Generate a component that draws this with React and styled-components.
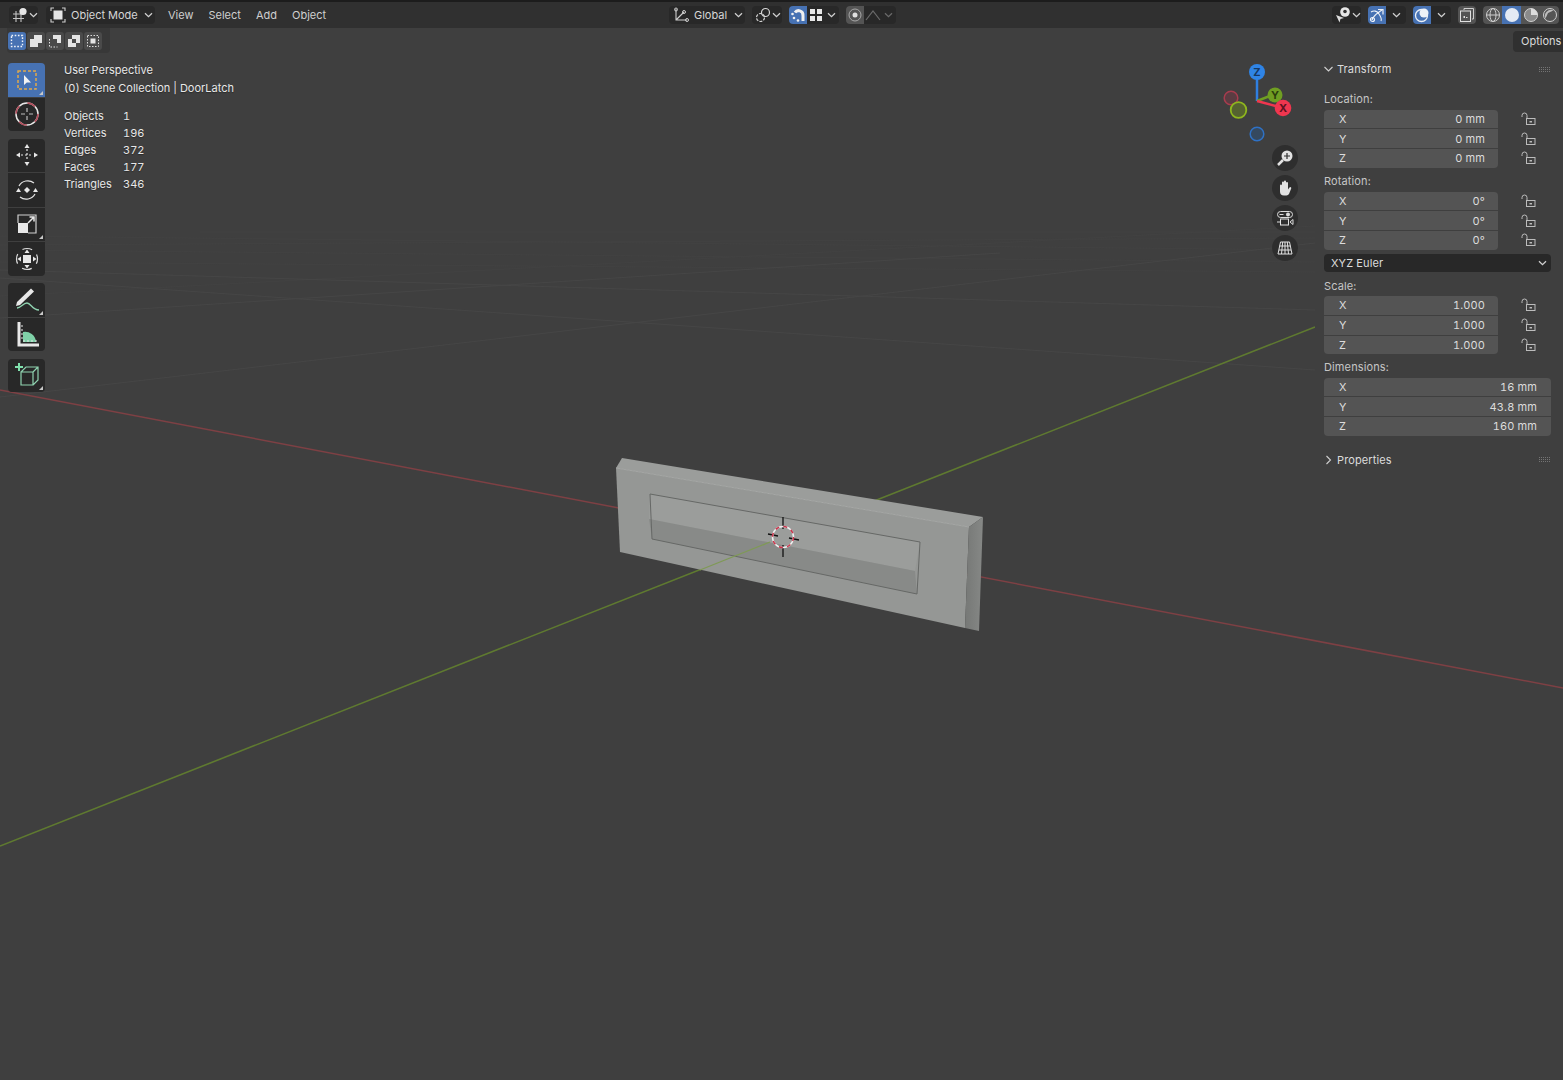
import React from "react";
import styled, { createGlobalStyle } from "styled-components";

const GlobalStyle = createGlobalStyle`
  html, body {
    margin: 0;
    padding: 0;
    background: #3f3f3f;
    font-family: Inter, "Noto Sans", "Liberation Sans", sans-serif;
  }
  svg {
    flex: none;
  }
`;

const Page = styled.div`
  position: relative;
  width: 1563px;
  height: 1080px;
  overflow: hidden;
  background: #3f3f3f;
  color: #dcdcdc;
  font-size: 11px;
  font-variant-numeric: tabular-nums;
  display: flex;
  flex-direction: column;
`;

const Scene = styled.svg`
  position: absolute;
  left: 0;
  top: 0;
  width: 1563px;
  height: 1080px;
`;

const TopBar = styled.div`
  position: relative;
  height: 26px;
  border-top: 2px solid #1c1c1c;
  background: #303030;
  display: grid;
  grid-template-columns: 660px 663px 1fr;
  align-items: center;
  padding-left: 9px;
`;

const BarSection = styled.div`
  display: flex;
  align-items: center;
  gap: ${(p) => p.$gap || 7}px;
`;

const Group = styled.div`
  display: flex;
  align-items: center;
  height: 18px;
  border-radius: 4px;
  background: #282828;
  width: ${(p) => p.$w}px;
  padding-left: ${(p) => p.$pad || 0}px;
  padding-right: ${(p) => p.$padRight || 0}px;
  box-sizing: border-box;
  overflow: hidden;
  flex: none;
`;

const GroupLabel = styled.span`
  margin-left: 5px;
  flex: 1;
  white-space: nowrap;
  color: #d6d6d6;
`;

const IconCell = styled.div`
  width: ${(p) => p.$w || 18}px;
  height: 18px;
  display: flex;
  align-items: center;
  justify-content: center;
  flex: none;
  background: ${(p) => p.$bg || "transparent"};
`;

const Menu = styled.div`
  display: flex;
  gap: 15px;
  margin-left: 5px;
  color: #cfcfcf;
`;

const ToolHeader = styled.div`
  position: relative;
  height: 25px;
  display: flex;
  justify-content: space-between;
  align-items: flex-start;
`;

const SelectModes = styled.div`
  display: flex;
  align-items: center;
  gap: 1px;
  width: 103px;
  height: 25px;
  margin-left: 7px;
  padding-left: 1px;
  box-sizing: border-box;
  background: #383838;
  border-radius: 0 0 4px 4px;
`;

const ModeButton = styled.div`
  width: 18px;
  height: 18px;
  border-radius: 3px;
  display: flex;
  align-items: center;
  justify-content: center;
  background: ${(p) => (p.$active ? "#4772b3" : "#4a4a4a")};
`;

const OptionsTab = styled.div`
  width: 50px;
  height: 21px;
  margin-top: 3px;
  padding-left: 8px;
  box-sizing: border-box;
  background: #303030;
  border-radius: 4px 0 0 4px;
  line-height: 21px;
  white-space: nowrap;
  overflow: hidden;
  color: #dcdcdc;
`;

const Viewport = styled.div`
  position: relative;
  flex: 1;
  display: flex;
  align-items: flex-start;
`;

const Toolbar = styled.div`
  width: 37px;
  margin: 10px 0 0 8px;
  display: flex;
  flex-direction: column;
  gap: 7.5px;
  flex: none;
`;

const ToolGroup = styled.div`
  display: flex;
  flex-direction: column;
  gap: 1px;
`;

const Tool = styled.div`
  position: relative;
  height: 33.5px;
  display: flex;
  align-items: center;
  justify-content: center;
  background: ${(p) => (p.$active ? "#4772b3" : "#282828")};
  &:first-child {
    border-radius: 4px 4px 0 0;
  }
  &:last-child {
    border-radius: 0 0 4px 4px;
  }
  &:only-child {
    border-radius: 4px;
  }
  ${(p) =>
    p.$corner &&
    `&::after {
      content: "";
      position: absolute;
      right: 2px;
      bottom: 2px;
      border-style: solid;
      border-width: 0 0 4px 4px;
      border-color: transparent transparent #c8c8c8 transparent;
    }`}
`;

const Stats = styled.div`
  margin: 8px 0 0 19px;
  width: 200px;
  flex: none;
  color: #e8e8e8;
  text-shadow: 0 1px 1px rgba(0, 0, 0, 0.35);
`;

const StatLine = styled.div`
  height: 18px;
  line-height: 18px;
  white-space: nowrap;
`;

const StatTable = styled.div`
  margin-top: 11px;
  display: grid;
  grid-template-columns: 59px 1fr;
  grid-auto-rows: 17px;
  line-height: 17px;
`;

const Nav = styled.div`
  position: absolute;
  left: 1217px;
  top: 9px;
  width: 85px;
  display: flex;
  flex-direction: column;
  align-items: flex-end;
`;

const NavButtons = styled.div`
  margin-top: 1px;
  display: flex;
  flex-direction: column;
  gap: 4px;
  padding-right: 4px;
`;

const NavButton = styled.div`
  width: 26px;
  height: 26px;
  border-radius: 50%;
  background: #2e2e2e;
  display: flex;
  align-items: center;
  justify-content: center;
`;

const Sidebar = styled.div`
  position: absolute;
  right: 0;
  top: 0;
  width: 248px;
  height: 425px;
  box-sizing: border-box;
  padding: 7px 12px 0 9px;
  background: #3f3f3f;
  letter-spacing: 0.12px;
`;

const PanelHead = styled.div`
  display: flex;
  align-items: center;
  height: 18px;
  color: #dcdcdc;
  margin-top: ${(p) => p.$mt || 0}px;
`;

const PanelTitle = styled.span`
  margin-left: 4px;
  flex: 1;
`;

const FieldLabel = styled.div`
  height: 16px;
  line-height: 16px;
  margin-top: ${(p) => p.$mt || 5.5}px;
  margin-bottom: 2.5px;
  color: #c6c6c6;
`;

const FieldBlock = styled.div`
  display: flex;
  align-items: flex-start;
`;

const Fields = styled.div`
  width: ${(p) => p.$w}px;
  display: flex;
  flex-direction: column;
  gap: 1px;
  border-radius: 4px;
  overflow: hidden;
  flex: none;
`;

const Field = styled.div`
  height: 18.7px;
  display: flex;
  justify-content: space-between;
  align-items: center;
  padding: 0 ${(p) => (p.$wide ? 14 : 13)}px 0 15px;
  background: #545454;
  color: #dcdcdc;
`;

const Locks = styled.div`
  margin-left: 23px;
  display: flex;
  flex-direction: column;
  gap: 1px;
`;

const LockCell = styled.div`
  height: 18.7px;
  display: flex;
  align-items: center;
`;

const Dropdown = styled.div`
  margin-top: 4.5px;
  height: 18px;
  border-radius: 4px;
  background: #282828;
  display: flex;
  align-items: center;
  justify-content: space-between;
  padding: 0 4px 0 7px;
  color: #dcdcdc;
`;

/* icons */
const Svg = ({ s = 16, children }) => (
  <svg width={s} height={s} viewBox={`0 0 ${s} ${s}`} fill="none">
    {children}
  </svg>
);

const Chevron = ({ dim }) => (
  <svg width="9" height="6" viewBox="0 0 9 6" fill="none">
    <path d="M1 1.2 4.5 4.6 8 1.2" stroke={dim ? "#6a6a6a" : "#d0d0d0"} strokeWidth="1.3" />
  </svg>
);

const EditorIcon = () => (
  <Svg>
    <path d="M1 7h11M1 11.500h11M4 4v11M9 4v11" stroke="#c4c4c4" strokeWidth="1.1" />
    <circle cx="11" cy="4.500" r="3.600" fill="#e6e6e6" />
  </Svg>
);

const ModeIcon = () => (
  <Svg>
    <path d="M1 4V1h3M12 1h3v3M15 12v3h-3M4 15H1v-3" stroke="#cfcfcf" strokeWidth="1.1" />
    <rect x="3.500" y="3.500" width="9" height="9" fill="#e4e4e4" />
  </Svg>
);

const GlobalIcon = () => (
  <Svg>
    <path d="M3 2v11h11M3 13l8-8" stroke="#cdcdcd" strokeWidth="1.1" />
    <circle cx="3" cy="2.500" r="1.500" stroke="#cdcdcd" />
    <circle cx="14" cy="13" r="1.500" stroke="#cdcdcd" />
    <circle cx="11" cy="5" r="1.500" stroke="#cdcdcd" />
  </Svg>
);

const LinkIcon = () => (
  <Svg>
    <circle cx="10.500" cy="5.500" r="4" stroke="#d4d4d4" strokeWidth="1.2" />
    <circle cx="5.500" cy="10.500" r="4" stroke="#d4d4d4" strokeWidth="1.2" strokeDasharray="3 1.2" />
  </Svg>
);

const MagnetIcon = () => (
  <Svg>
    <path d="M5 5.500C7 2.500 13.500 3 13 9v5" stroke="#f0f0f0" strokeWidth="3" />
    <circle cx="2.500" cy="7" r="1.300" fill="#f0f0f0" />
    <circle cx="4" cy="11" r="1.300" fill="#f0f0f0" />
    <circle cx="8" cy="13.500" r="1.300" fill="#f0f0f0" />
  </Svg>
);

const SnapGridIcon = () => (
  <Svg s={14}>
    <rect x="1" y="1" width="5" height="5" fill="#e8e8e8" />
    <rect x="8" y="1" width="5" height="5" fill="#e8e8e8" />
    <rect x="1" y="8" width="5" height="5" fill="#e8e8e8" />
    <rect x="8" y="8" width="5" height="5" fill="#e8e8e8" />
  </Svg>
);

const ProportionalIcon = () => (
  <Svg>
    <circle cx="8" cy="8" r="6" stroke="#a8a8a8" />
    <circle cx="8" cy="8" r="2.500" fill="#e0e0e0" />
  </Svg>
);

const FalloffIcon = () => (
  <Svg>
    <path d="M1 13 8 4l7 9" stroke="#6a6a6a" strokeWidth="1.2" />
  </Svg>
);

const EyeIcon = () => (
  <Svg>
    <circle cx="10" cy="5" r="4.800" fill="#e6e6e6" />
    <circle cx="10" cy="4.500" r="1.800" fill="#333" />
    <path d="M1 8l8 3-3.500 1-1 3.500Z" fill="#dcdcdc" />
  </Svg>
);

const GizmoIcon = () => (
  <Svg>
    <path d="M3 13C5 7 9 6 13 3M9 2.500h5v5" stroke="#eef2f8" strokeWidth="1.2" />
    <circle cx="3.500" cy="12.500" r="2" stroke="#eef2f8" strokeWidth="1.2" />
    <path d="M2 5c3-2 6-1 8 2s3 5 2 7" stroke="#eef2f8" strokeWidth="1.1" />
  </Svg>
);

const OverlayIcon = () => (
  <Svg>
    <circle cx="7.500" cy="8.500" r="6" stroke="#eef2f8" strokeWidth="1.3" />
    <circle cx="10" cy="6" r="4.500" fill="#eef2f8" />
  </Svg>
);

const XrayIcon = () => (
  <Svg>
    <path d="M5 3V1.500h9.500V12H13" stroke="#cfcfcf" />
    <rect x="1.500" y="4" width="10" height="10.500" stroke="#e0e0e0" />
    <rect x="4.500" y="9" width="1.500" height="2" fill="#e0e0e0" />
    <rect x="7" y="10" width="1.500" height="1" fill="#e0e0e0" />
  </Svg>
);

const WireIcon = () => (
  <Svg>
    <circle cx="8" cy="8" r="6.500" stroke="#cfcfcf" />
    <ellipse cx="8" cy="8" rx="3" ry="6.500" stroke="#cfcfcf" />
    <path d="M1.500 8h13" stroke="#cfcfcf" />
  </Svg>
);

const SolidIcon = () => (
  <Svg>
    <circle cx="8" cy="8" r="7" fill="#e4eaf4" />
  </Svg>
);

const MaterialIcon = () => (
  <Svg>
    <circle cx="8" cy="8" r="6.500" fill="#8a8a8a" stroke="#d0d0d0" />
    <path d="M8 1.500A6.500 6.500 0 0 1 14.500 8H8Z" fill="#dcdcdc" />
  </Svg>
);

const RenderedIcon = () => (
  <Svg>
    <circle cx="8" cy="8" r="6.500" stroke="#cfcfcf" />
    <path d="M3.500 11.500A6 6 0 0 1 11.500 3.500L6 6Z" fill="#bdbdbd" />
  </Svg>
);

const MODE_ICONS = [
  <Svg s={14} key="new">
    <rect x="1.500" y="1.500" width="11" height="11" stroke="#f2f5fa" strokeWidth="1.4" strokeDasharray="1.600 1.600" />
  </Svg>,
  <Svg s={14} key="extend">
    <path d="M5 1h8v8H9v4H1V5h4Z" fill="#e4e4e4" />
  </Svg>,
  <Svg s={14} key="subtract">
    <path d="M5 1h8v8H9V5H5Z" fill="#e4e4e4" />
    <path d="M1.500 5v8h8" stroke="#e4e4e4" strokeDasharray="1.500 1.500" />
  </Svg>,
  <Svg s={14} key="invert">
    <path d="M5 1h8v8H9V5H5Z" fill="#e4e4e4" />
    <path d="M1 5h4v4h4v4H1Z" fill="#e4e4e4" />
  </Svg>,
  <Svg s={14} key="intersect">
    <rect x="1.500" y="1.500" width="11" height="11" stroke="#dcdcdc" strokeDasharray="1.500 1.500" />
    <rect x="4.500" y="4.500" width="5" height="5" fill="#e4e4e4" />
  </Svg>,
];

const SelectBoxTool = () => (
  <Svg s={24}>
    <rect x="3" y="3" width="18" height="18" stroke="#e0a94c" strokeWidth="1.500" strokeDasharray="3 2" />
    <path d="M9 7v10l2.800-2.500h4.200Z" fill="#f2f2f2" />
  </Svg>
);

const CursorTool = () => (
  <Svg s={26}>
    <circle cx="13" cy="13" r="11" stroke="#e8e8e8" strokeWidth="1.500" />
    <circle cx="13" cy="13" r="11" stroke="#b04a58" strokeWidth="1.500" strokeDasharray="8.600 8.700" />
    <path d="M13 7v4M13 15v4M7 13h4M15 13h4" stroke="#bdbdbd" strokeWidth="1.200" />
  </Svg>
);

const MoveTool = () => (
  <Svg s={26}>
    <path d="M13 7v12M7 13h12" stroke="#e4e4e4" strokeWidth="1.200" strokeDasharray="2 2" />
    <path d="M13 2l2.500 4h-5ZM13 24l-2.500-4h5ZM2 13l4-2.500v5ZM24 13l-4 2.500v-5Z" fill="#e8e8e8" />
  </Svg>
);

const RotateTool = () => (
  <Svg s={26}>
    <path d="M5 9A10 10 0 0 1 20 6M21 17A10 10 0 0 1 6 20" stroke="#e4e4e4" strokeWidth="1.200" />
    <path d="M13 10l3 3-3 3-3-3Z" fill="#e8e8e8" />
    <path d="M2 15l2.500-4 2.500 4ZM24 15l-2.500-4-2.500 4Z" fill="#e8e8e8" />
  </Svg>
);

const ScaleTool = () => (
  <Svg s={24}>
    <path d="M3 11V3h18v18h-8" stroke="#cfcfcf" strokeWidth="1.200" />
    <rect x="3" y="11" width="10" height="10" fill="#e8e8e8" />
    <path d="M13 11l6-6M14.500 5H19v4.500" stroke="#e8e8e8" strokeWidth="1.500" />
  </Svg>
);

const TransformTool = () => (
  <Svg s={26}>
    <circle cx="13" cy="13" r="10.500" stroke="#dcdcdc" strokeWidth="1.200" strokeDasharray="10 6.500" strokeDashoffset="5" />
    <rect x="9" y="9" width="8" height="8" fill="#e8e8e8" />
    <path d="M13 3.500l2.500 3.500h-5ZM13 22.500l-2.500-3.500h5ZM3.500 13 7 10.500v5ZM22.500 13 19 15.500v-5Z" fill="#e8e8e8" />
  </Svg>
);

const AnnotateTool = () => (
  <Svg s={26}>
    <path d="M17 1.500l3 3L6 18l-4 1 1-4Z" fill="#e8e8e8" />
    <path d="M3 21c4 0 6-5 10-5s5 7 12 7" stroke="#8fd3b0" strokeWidth="1.300" />
  </Svg>
);

const MeasureTool = () => (
  <Svg s={26}>
    <path d="M9 21V11a11 11 0 0 1 13 10Z" fill="#7fd1a8" />
    <path d="M5 1v23h20" stroke="#e8e8e8" strokeWidth="3" />
    <path d="M7 5h2M7 9h2M7 13h2M7 17h2M10 21v-2M14 21v-2M18 21v-2M22 21v-2" stroke="#e8e8e8" />
  </Svg>
);

const AddCubeTool = () => (
  <Svg s={26}>
    <path d="M7 10h12v13H7ZM7 10l5-5h12v13l-5 5M19 10l5-5" stroke="#8fd3b0" strokeWidth="1.200" />
    <path d="M5 1v8M1 5h8" stroke="#7fe0ac" strokeWidth="2" />
  </Svg>
);

const ZoomNavIcon = () => (
  <Svg s={18}>
    <circle cx="11" cy="7" r="5.500" fill="#e2e2e2" />
    <path d="M7 11l-5 5" stroke="#e2e2e2" strokeWidth="2.500" />
    <path d="M11 4v6M8 7h6" stroke="#2e2e2e" strokeWidth="1.200" />
  </Svg>
);

const HandNavIcon = () => (
  <Svg s={18}>
    <path
      d="M4 10V6.500a1 1 0 0 1 2 0V9V3.500a1 1 0 0 1 2 0V9V2.500a1 1 0 0 1 2 0V9V4a1 1 0 0 1 2 0v6.500l1.500-2a1 1 0 0 1 1.700 1L13 15a3 3 0 0 1-2.500 1.500H8A4 4 0 0 1 4 12.500Z"
      fill="#e2e2e2"
    />
  </Svg>
);

const CameraNavIcon = () => (
  <Svg s={18}>
    <rect x="1.500" y="2.500" width="15" height="6" rx="3" stroke="#dcdcdc" />
    <circle cx="12" cy="5.500" r="2" fill="#dcdcdc" />
    <path d="M3.500 5.500h4" stroke="#dcdcdc" />
    <rect x="4.500" y="10" width="8" height="6" stroke="#e2e2e2" />
    <path d="M1 13h3M17 10.500v5l-3-2.500Z" stroke="#dcdcdc" />
  </Svg>
);

const GridNavIcon = () => (
  <Svg s={18}>
    <path
      d="M4.500 3h9L16 15H2ZM9 3v12M3.600 7h10.800M3 11h12M6.700 3 5.500 15M11.300 3l1.200 12"
      stroke="#e2e2e2"
      strokeWidth="1"
    />
  </Svg>
);

const LockIcon = () => (
  <svg width="16" height="14" viewBox="0 0 16 14" fill="none">
    <path d="M1 5V3.500a2.500 2.500 0 0 1 5 0V6" stroke="#bcbcbc" strokeWidth="1" />
    <rect x="5.500" y="6.500" width="8.500" height="6" stroke="#bcbcbc" strokeWidth="1" />
    <rect x="8.500" y="9" width="2.500" height="1.500" fill="#bcbcbc" />
  </svg>
);

const ArrowIcon = ({ open }) => (
  <svg width="9" height="10" viewBox="0 0 9 10" fill="none">
    <path d={open ? "M.5 3 4.500 7l4-4" : "M2.500 1l4 4-4 4"} stroke="#d0d0d0" strokeWidth="1.100" />
  </svg>
);

const GripIcon = () => (
  <svg width="12" height="5" viewBox="0 0 12 5" fill="none">
    <path d="M0 .5h12M0 2.500h12M0 4.500h12" stroke="#747474" strokeWidth="1" strokeDasharray="1 1" />
  </svg>
);

/* gizmo in the corner of the viewport */
const AxisGizmo = () => (
  <svg width="85" height="82" viewBox="0 0 85 82" fill="none">
    <path d="M40 39V8" stroke="#2f7fe0" strokeWidth="2.500" />
    <path d="M40 39 58 32" stroke="#6f9e22" strokeWidth="2.500" />
    <path d="M40 39 66 46" stroke="#f0364f" strokeWidth="2.500" />
    <circle cx="14" cy="36" r="6.800" fill="#5a3c42" stroke="#a83c4e" strokeWidth="1.500" />
    <circle cx="21.500" cy="48" r="7.800" fill="#556230" stroke="#8fb61e" strokeWidth="1.800" />
    <circle cx="40" cy="72" r="6.800" fill="#35495f" stroke="#2f71c4" strokeWidth="1.500" />
    <circle cx="40" cy="10" r="8" fill="#2f84e6" />
    <circle cx="58" cy="33" r="7.500" fill="#6f9e22" />
    <circle cx="66" cy="46" r="8.300" fill="#f0364f" />
    <text x="40" y="14" textAnchor="middle" fontSize="11" fontWeight="700" fill="#17375f" fontFamily="Inter, sans-serif">Z</text>
    <text x="58" y="37" textAnchor="middle" fontSize="11" fontWeight="700" fill="#2b3e0c" fontFamily="Inter, sans-serif">Y</text>
    <text x="66" y="50" textAnchor="middle" fontSize="11" fontWeight="700" fill="#5f1220" fontFamily="Inter, sans-serif">X</text>
  </svg>
);

const MAIN_FLOOR_LINES = ["M0 397 1315 243", "M0 278 1315 370", "M0 318 1000 253", "M0 270 1315 310"];

const FAINT_FLOOR_LINES = [
  "M0 262 1315 272",
  "M0 250 1315 262",
  "M0 245 1315 238",
  "M0 236 1315 250",
  "M200 232 1315 232",
  "M0 296 1315 226",
];

const DoorLatch = () => (
  <Scene viewBox="0 0 1563 1080" fill="none">
    <defs>
      <linearGradient id="sideShade" x1="0" y1="0" x2="1" y2="0">
        <stop offset="0" stopColor="#767876" />
        <stop offset="1" stopColor="#868886" />
      </linearGradient>
    </defs>
    <g stroke="#424242" strokeWidth="1">
      {FAINT_FLOOR_LINES.map((d) => (
        <path key={d} d={d} />
      ))}
    </g>
    <g stroke="#464646" strokeWidth="1">
      {MAIN_FLOOR_LINES.map((d) => (
        <path key={d} d={d} />
      ))}
    </g>
    <path d="M0 390 1563 688" stroke="#7e4044" strokeWidth="1.500" />
    <path d="M1315 327 0 846" stroke="#5f7a30" strokeWidth="1.600" />

    <path d="M622 458 983 517 969 527 616 468Z" fill="#9b9d9b" />
    <path d="M616 468 969 527 965 628 620 552Z" fill="#959795" />
    <path d="M969 527 983 517 979 631 965 628Z" fill="url(#sideShade)" />
    <path d="M616 468 969 527" stroke="#a6a8a6" strokeWidth="1" />

    <path d="M650 494 920 542 915 571 649 519Z" fill="#9b9d9b" />
    <path d="M649 519 915 571 917 594 652 539Z" fill="#888a88" />
    <path d="M650 494 920 542 917 594 652 539Z" stroke="#666866" strokeWidth="1" />

    <path d="M770 542 700 570" stroke="#7f9a55" strokeWidth="1.300" />

    <path d="M783 517v12M783 545v12M768 534l10 2M789 538l10 2" stroke="#111" strokeWidth="1.300" />
    <circle cx="783" cy="537" r="10.500" stroke="#f0f0f0" strokeWidth="1.500" />
    <circle cx="783" cy="537" r="10.500" stroke="#c8334a" strokeWidth="1.500" strokeDasharray="4 4.250" />
  </Scene>
);

const LocationRows = [
  ["X", "0 mm"],
  ["Y", "0 mm"],
  ["Z", "0 mm"],
];
const RotationRows = [
  ["X", "0°"],
  ["Y", "0°"],
  ["Z", "0°"],
];
const ScaleRows = [
  ["X", "1.000"],
  ["Y", "1.000"],
  ["Z", "1.000"],
];
const DimensionRows = [
  ["X", "16 mm"],
  ["Y", "43.8 mm"],
  ["Z", "160 mm"],
];

const STATS = [
  ["Objects", "1"],
  ["Vertices", "196"],
  ["Edges", "372"],
  ["Faces", "177"],
  ["Triangles", "346"],
];

const FieldStack = ({ rows, width, locks }) => (
  <FieldBlock>
    <Fields $w={width}>
      {rows.map(([axis, value]) => (
        <Field key={axis} $wide={!locks}>
          <span>{axis}</span>
          <span>{value}</span>
        </Field>
      ))}
    </Fields>
    {locks && (
      <Locks>
        {rows.map(([axis]) => (
          <LockCell key={axis}>
            <LockIcon />
          </LockCell>
        ))}
      </Locks>
    )}
  </FieldBlock>
);

const App = () => (
  <Page>
    <GlobalStyle />
    <DoorLatch />

    <TopBar>
      <BarSection $gap={8}>
        <Group $w={29} $pad={3}>
          <EditorIcon />
          <IconCell $w={10}>
            <Chevron />
          </IconCell>
        </Group>
        <Group $w={109} $pad={4} $padRight={2}>
          <ModeIcon />
          <GroupLabel>Object Mode</GroupLabel>
          <Chevron />
        </Group>
        <Menu>
          <span>View</span>
          <span>Select</span>
          <span>Add</span>
          <span>Object</span>
        </Menu>
      </BarSection>

      <BarSection>
        <Group $w={76} $pad={4} $padRight={2}>
          <GlobalIcon />
          <GroupLabel>Global</GroupLabel>
          <Chevron />
        </Group>
        <Group $w={30} $pad={3}>
          <LinkIcon />
          <IconCell $w={11}>
            <Chevron />
          </IconCell>
        </Group>
        <Group $w={50}>
          <IconCell $bg="#4772b3">
            <MagnetIcon />
          </IconCell>
          <IconCell>
            <SnapGridIcon />
          </IconCell>
          <IconCell $w={12}>
            <Chevron />
          </IconCell>
        </Group>
        <Group $w={50}>
          <IconCell $bg="#545454">
            <ProportionalIcon />
          </IconCell>
          <IconCell>
            <FalloffIcon />
          </IconCell>
          <IconCell $w={12}>
            <Chevron dim />
          </IconCell>
        </Group>
      </BarSection>

      <BarSection>
        <Group $w={29} $pad={3}>
          <EyeIcon />
          <IconCell $w={10}>
            <Chevron />
          </IconCell>
        </Group>
        <Group $w={38}>
          <IconCell $bg="#4772b3">
            <GizmoIcon />
          </IconCell>
          <IconCell $w={20}>
            <Chevron />
          </IconCell>
        </Group>
        <Group $w={38}>
          <IconCell $bg="#4772b3">
            <OverlayIcon />
          </IconCell>
          <IconCell $w={20}>
            <Chevron />
          </IconCell>
        </Group>
        <Group $w={18}>
          <IconCell $bg="#545454">
            <XrayIcon />
          </IconCell>
        </Group>
        <Group $w={76}>
          <IconCell $w={19} $bg="#545454">
            <WireIcon />
          </IconCell>
          <IconCell $w={19} $bg="#4772b3">
            <SolidIcon />
          </IconCell>
          <IconCell $w={19} $bg="#545454">
            <MaterialIcon />
          </IconCell>
          <IconCell $w={19} $bg="#545454">
            <RenderedIcon />
          </IconCell>
        </Group>
      </BarSection>
    </TopBar>

    <ToolHeader>
      <SelectModes>
        {MODE_ICONS.map((icon, i) => (
          <ModeButton key={icon.key} $active={i === 0}>
            {icon}
          </ModeButton>
        ))}
      </SelectModes>
      <OptionsTab>Options</OptionsTab>
    </ToolHeader>

    <Viewport>
      <Toolbar>
        <ToolGroup>
          <Tool $active $corner>
            <SelectBoxTool />
          </Tool>
          <Tool>
            <CursorTool />
          </Tool>
        </ToolGroup>
        <ToolGroup>
          <Tool>
            <MoveTool />
          </Tool>
          <Tool>
            <RotateTool />
          </Tool>
          <Tool $corner>
            <ScaleTool />
          </Tool>
          <Tool>
            <TransformTool />
          </Tool>
        </ToolGroup>
        <ToolGroup>
          <Tool $corner>
            <AnnotateTool />
          </Tool>
          <Tool>
            <MeasureTool />
          </Tool>
        </ToolGroup>
        <ToolGroup>
          <Tool $corner>
            <AddCubeTool />
          </Tool>
        </ToolGroup>
      </Toolbar>

      <Stats>
        <StatLine>User Perspective</StatLine>
        <StatLine>(0) Scene Collection | DoorLatch</StatLine>
        <StatTable>
          {STATS.map(([name, count]) => (
            <React.Fragment key={name}>
              <span>{name}</span>
              <span>{count}</span>
            </React.Fragment>
          ))}
        </StatTable>
      </Stats>

      <Nav>
        <AxisGizmo />
        <NavButtons>
          <NavButton>
            <ZoomNavIcon />
          </NavButton>
          <NavButton>
            <HandNavIcon />
          </NavButton>
          <NavButton>
            <CameraNavIcon />
          </NavButton>
          <NavButton>
            <GridNavIcon />
          </NavButton>
        </NavButtons>
      </Nav>

      <Sidebar>
        <PanelHead>
          <ArrowIcon open />
          <PanelTitle>Transform</PanelTitle>
          <GripIcon />
        </PanelHead>
        <FieldLabel $mt={13}>Location:</FieldLabel>
        <FieldStack rows={LocationRows} width={174} locks />
        <FieldLabel>Rotation:</FieldLabel>
        <FieldStack rows={RotationRows} width={174} locks />
        <Dropdown>
          <span>XYZ Euler</span>
          <Chevron />
        </Dropdown>
        <FieldLabel>Scale:</FieldLabel>
        <FieldStack rows={ScaleRows} width={174} locks />
        <FieldLabel $mt={5}>Dimensions:</FieldLabel>
        <FieldStack rows={DimensionRows} width={227} />
        <PanelHead $mt={15}>
          <ArrowIcon />
          <PanelTitle>Properties</PanelTitle>
          <GripIcon />
        </PanelHead>
      </Sidebar>
    </Viewport>
  </Page>
);

export default App;
